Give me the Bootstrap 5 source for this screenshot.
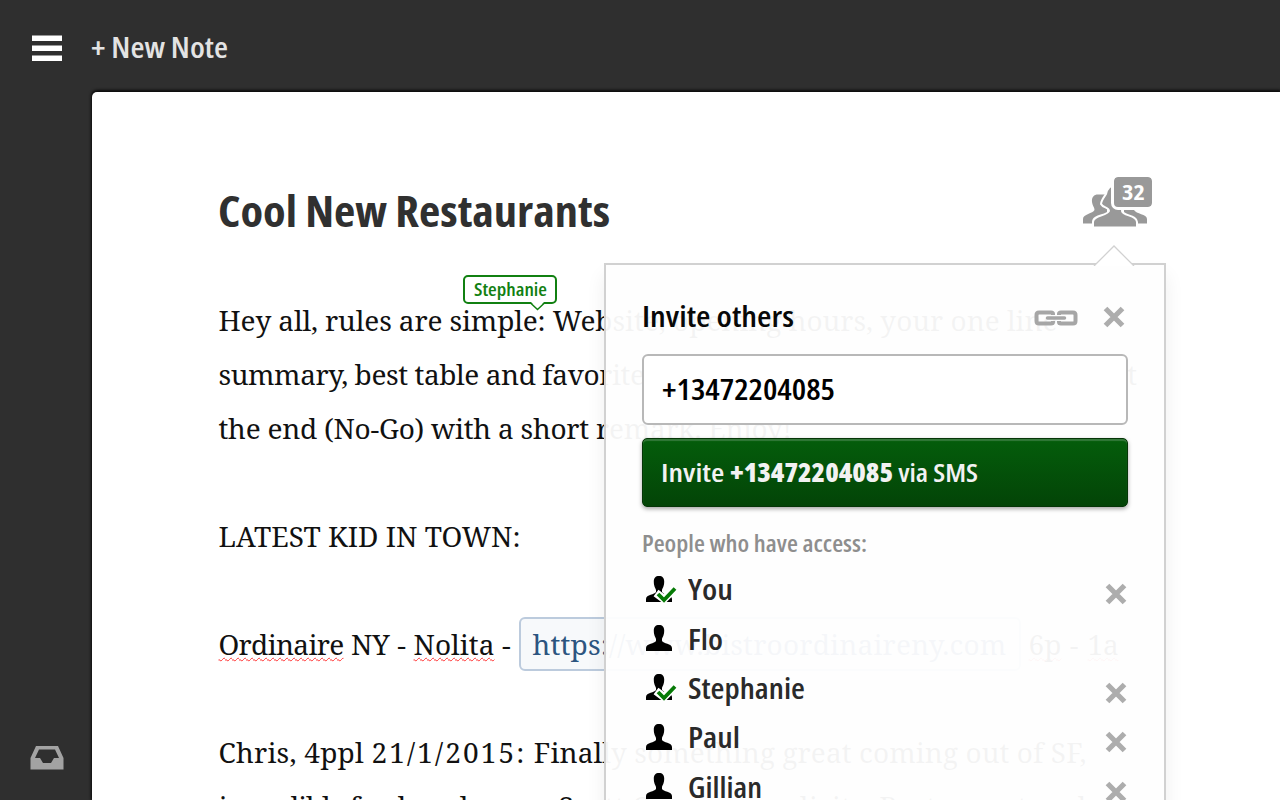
<!DOCTYPE html>
<html lang="en">
<head>
<meta charset="utf-8">
<meta name="viewport" content="width=device-width, initial-scale=1">
<title>Cool New Restaurants</title>
<link href="https://cdn.jsdelivr.net/npm/bootstrap@5.3.0/dist/css/bootstrap.min.css" rel="stylesheet">
<style>
body{height:800px;background:#2f2f2f;font-family:"Open Sans",sans-serif;font-stretch:75%;font-weight:600;color:#222}
[data-w]{display:inline-block;white-space:pre;text-align:left;transform-origin:0 50%}
.topbar{height:92px;padding:2px 0 0 32px;color:#e3e3e3;font-size:28px}
.topbar .new-note{margin-left:29px}
.rail{width:92px;padding:0 0 30px 30px}
.sheet{background:#fff;border-radius:5px 0 0 0;box-shadow:0 -1px 3px 1px rgba(0,0,0,.8);height:708px}
.title{font-size:43px;line-height:60px;font-weight:700;color:#303030;margin:89px 0 0 126px}
.people{right:128px;top:85px;width:70px;height:52px}
.people svg{bottom:-1px}
.count{right:0;top:0;width:38px;height:30px;line-height:28px;background:#999;border-radius:4px;color:#fff;font-size:22px;font-weight:700;outline:3px solid #fff}
.note{font-family:"Noto Serif","DejaVu Serif Condensed","DejaVu Serif",serif;font-stretch:100%;font-weight:400;font-size:28px;line-height:54px;margin:52px 0 0 126.5px;color:#111}
.note>div{height:54px;white-space:pre}
.spell{text-decoration:underline wavy #f33 1px;text-decoration-skip-ink:none;text-underline-offset:2px}
.url{display:inline-block;height:54px;width:502px;line-height:50px;border:2px solid #bccbdd;border-radius:6px;background:#f7f9fb;color:#2c5580;padding-left:12px;vertical-align:top;margin-right:8px}
.cursor-tag{left:371px;top:183px;width:94px;height:29px;border:2px solid #118011;border-radius:5px;background:#fff;color:#118011;font-size:18px;line-height:25px}
.cursor-tag svg{position:absolute;left:65px;top:24px}
.invite{left:512px;top:171px;width:562px;height:560px;border:2px solid #d1d1d1;background:rgba(254,254,254,.956);box-shadow:0 12px 18px rgba(0,0,0,.07);padding:35px 36px 0}
.invite .tip{position:absolute;right:29px;top:-20px}
.invite .head{height:32px;font-size:28px;line-height:30px;color:#080808;margin-bottom:22px}
.invite .head .link{margin-top:5px}
.invite .head .dismiss{margin:2px 3px 0 25px}
.phone{height:71px;border:2px solid #b8b8b8;border-radius:6px;background:#fff;font-size:28px;color:#000;padding:0 18px 2px;margin-bottom:13px}
.send,.send:hover{height:69px;border:1px solid #053507;border-radius:5px;background:linear-gradient(#045d0b,#034407);box-shadow:inset 0 2px 1px #34793a,0 2px 4px rgba(0,0,0,.35);color:#f2f2f2;font-size:26px;font-stretch:75%;font-weight:600;padding:0 18px;text-align:left}
.access{font-size:23px;line-height:30px;color:#8e8e8e;margin-top:21px;margin-bottom:7px}
.person{height:49.4px;font-size:28px;line-height:49px;color:#2a2a2a}
.person .who{width:45.5px;padding:0 0 0 3.5px}
.person .who svg,.person .close-x{display:block}
.person .close-x{margin:9px 1.5px 0 0}
</style>
</head>
<body class="overflow-hidden">
<svg class="d-none">
<symbol id="head" viewBox="0 0 26 26"><path d="M13 0C9.500 0 7.800 2 7.800 5.500C7.800 10.500 9.500 12 10 14V16C9 18.500 0 18.500 0 23V26H26V23C26 18.500 17 18.500 16 16V14C16.500 12 18.200 10.500 18.200 5.500C18.200 2 16.500 0 13 0Z"/></symbol>
<symbol id="cross" viewBox="0 0 22 22"><path d="M2.500 2.500L19.500 19.500M19.500 2.500L2.500 19.500" stroke="#adadad" stroke-width="5.200" fill="none"/></symbol>
</svg>
<nav class="topbar d-flex align-items-center">
<svg width="30" height="28" fill="#fff"><path d="M0 2.500h30v5.500H0zM0 12.500h30v5.500H0zM0 22.500h30V28H0z"/></svg>
<span class="new-note"><span data-w="137">+ New Note</span></span>
</nav>
<div class="d-flex">
<aside class="rail d-flex align-items-end flex-shrink-0">
<svg width="34" height="24"><path fill="#a3a3a3" fill-rule="evenodd" d="M6 0H28L33.500 12V23.500H.5V12ZM9 3.500L5 12H10L13 17H21L24 12H29L25 3.500Z"/></svg>
</aside>
<main class="sheet flex-grow-1 position-relative">
<h1 class="title"><span data-w="392">Cool New Restaurants</span></h1>
<div class="people position-absolute">
<svg class="position-absolute start-0" width="66" height="45" viewBox="0 0 66 45" fill="#999">
<path d="M16 9.500C12 9.500 9.500 12 10 17C10.500 21 12.500 22 12.500 25C11 28.500 1 29 1 34V38.500H25V9.500Z"/><path d="M50 9.500C54 9.500 55 12 55 17C54 21 52 22 52 25C54 29 65 29 65 34V38.500H42V9.500Z"/>
<path stroke="#fff" stroke-width="2" d="M34 0C27 0 25 4 24 9C22 12 19 16 19 19C21 23 27 22 27 26C25 31 11 30 11 37V42.500H55V37C55 30 41 31 40 26C40 21 43 18 43 12C43 5 40 0 34 0Z"/></svg>
<span class="count position-absolute text-center"><span data-w="23">32</span></span>
</div>
<div class="note">
<div><span data-w="327">Hey all, rules are simple:</span><span data-w="512"> Website, opening hours, your one line</span></div>
<div><span data-w="426">summary, best table and favorite</span><span data-w="494"> dish. Please put the bad places at</span></div>
<div><span data-w="573">the end (No-Go) with a short remark. Enjoy!</span></div>
<div></div>
<div><span data-w="302">LATEST KID IN TOWN:</span></div>
<div></div>
<div><span data-w="125"><span class="spell">Ordinaire</span></span><span data-w="70"> NY - </span><span data-w="81"><span class="spell">Nolita</span></span><span data-w="24"> - </span><span class="url"><span data-w="474">https://www.bistroordinaireny.com</span></span><span data-w="33"><span class="spell">6p</span></span><span data-w="26"> - </span><span data-w="31"><span class="spell">1a</span></span></div>
<div></div>
<div><span data-w="153">Chris, 4ppl </span><span data-w="155">21/1/2015:</span><span data-w="560"> Finally something great coming out of SF,</span></div>
<div><span data-w="340">incredible food, cool menu. </span><span data-w="528">Scott O. uses simplicity. Restaurant and</span></div>
</div>
<div class="cursor-tag position-absolute text-center"><span data-w="73">Stephanie</span><svg width="16" height="10"><path d="M0 0L7.500 8L15 0" fill="#fff"/><path d="M0 1.500L7.500 8.500L15 1.500" fill="none" stroke="#118011" stroke-width="1.500"/></svg></div>
<section class="invite position-absolute">
<svg class="tip" width="42" height="21"><path d="M1 21L21 1L41 21" fill="#fff" stroke="#d1d1d1" stroke-width="1.300"/></svg>
<div class="head d-flex align-items-center"><span data-w="152">Invite others</span>
<svg class="link ms-auto" width="44" height="17" fill="none" stroke="#a6a6a6"><path stroke-width="4" d="M19 5V4Q19 2.500 17 2.500H5Q2.500 2.500 2.500 5V11Q2.500 13.500 5 13.500H17Q19 13.500 19 12V11M25 5V4Q25 2.500 27 2.500H39Q41.500 2.500 41.500 5V11Q41.500 13.500 39 13.500H27Q25 13.500 25 12V11"/><path stroke-width="3.500" stroke-linecap="round" d="M13.500 8H30.500"/></svg>
<svg class="dismiss" width="22" height="22"><use href="#cross"/></svg></div>
<div class="phone d-flex align-items-center"><span data-w="173">+13472204085</span></div>
<button class="send btn w-100 d-block"><span data-w="69">Invite </span><b data-w="163">+13472204085</b><span data-w="85"> via SMS</span></button>
<div class="access"><span data-w="225">People who have access:</span></div>
<div id="list"></div>
</section>
</main>
</div>
<script>
// The people the note is shared with: name, text width, online, removable
const people=[["You",45,1,1],["Flo",35,0,0],["Stephanie",117,1,1],["Paul",52,0,1],["Gillian",74,0,1]];
list.innerHTML=people.map(([n,w,on,x])=>`<div class="person d-flex align-items-center"><span class="who"><svg width="32" height="28"><use href="#head" width="26" height="26"/>${on?'<path d="M10 17L18 23L29 12" fill="none" stroke="#fff" stroke-width="8"/><path d="M12 18L18 24L29 12.500" fill="none" stroke="#067a06" stroke-width="3.800"/>':''}</svg></span><span data-w="${w}">${n}</span>${x?'<svg class="close-x ms-auto" width="22" height="22"><use href="#cross"/></svg>':''}</div>`).join('');
// Fit each run of text to its set width: serif by tracking, sans by widening the condensed face
document.querySelectorAll('[data-w]').forEach(e=>{
  const w=+e.dataset.w,n=e.getBoundingClientRect().width;
  if(e.closest('.note'))e.style.letterSpacing=(w-n)/e.textContent.length+'px';
  else{e.style.transform=`scaleX(${w/n})`;e.style.marginRight=(w-n)+'px'}
});
</script>
<script src="https://cdn.jsdelivr.net/npm/bootstrap@5.3.0/dist/js/bootstrap.bundle.min.js"></script>
</body>
</html>
